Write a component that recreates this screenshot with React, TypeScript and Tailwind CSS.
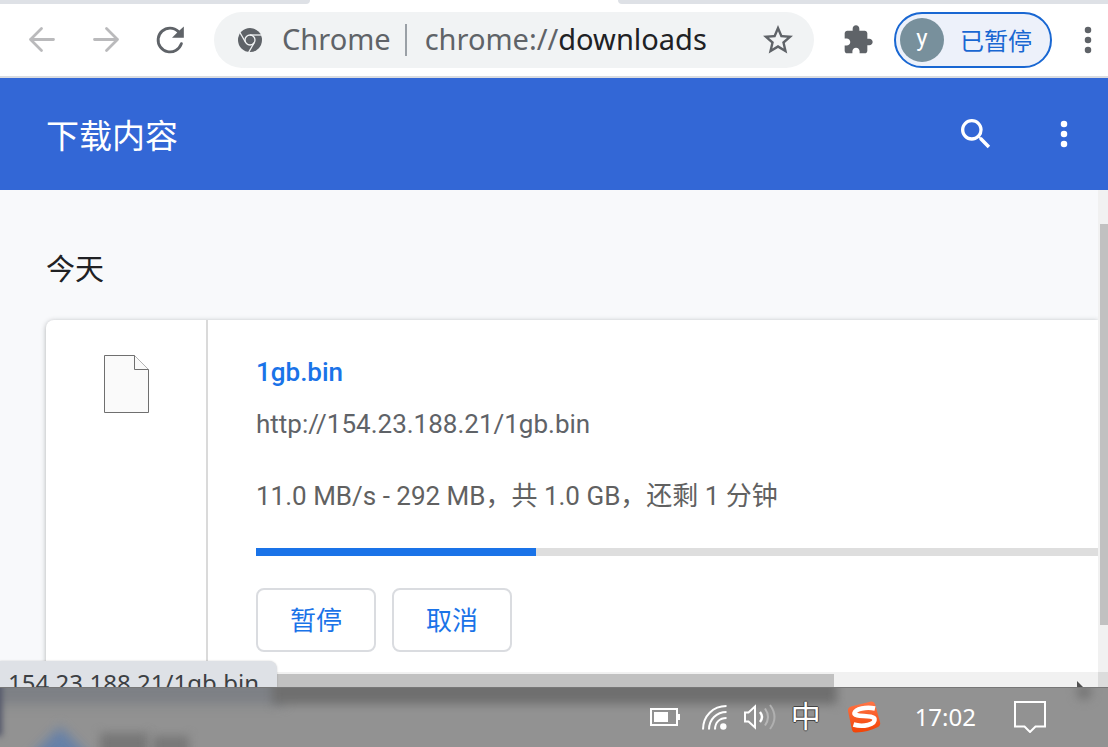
import type { ReactNode } from "react";

const DOWNLOAD = {
  name: "1gb.bin",
  url: "http://154.23.188.21/1gb.bin",
  status: "11.0 MB/s - 292 MB，共 1.0 GB，还剩 1 分钟",
  shown: 33.2,
};

function IconButton({ label, className, children }: { label: string; className: string; children: ReactNode }) {
  return (
    <button type="button" aria-label={label} className={`flex shrink-0 items-center justify-center ${className}`}>
      {children}
    </button>
  );
}

function MoreIcon() {
  return (
    <svg viewBox="0 0 24 24" className="size-10" fill="currentColor" aria-hidden="true">
      <circle cx="12" cy="6" r="1.95" />
      <circle cx="12" cy="12" r="1.95" />
      <circle cx="12" cy="18" r="1.95" />
    </svg>
  );
}

function ArrowIcon({ flip = false }: { flip?: boolean }) {
  return (
    <svg viewBox="0 0 40 40" className={flip ? "size-10 -scale-x-100" : "size-10"} fill="none" stroke="#bababc" strokeWidth="2.8" strokeLinecap="round" strokeLinejoin="round" aria-hidden="true">
      <path d="M31.500 19.500H8.500M19.500 8.500L8.500 19.500L19.500 30.500" />
    </svg>
  );
}

function ChromeIcon() {
  return (
    <svg viewBox="-12 -12 24 24" className="size-6 shrink-0" aria-hidden="true">
      <circle r="12" fill="#5f6368" />
      <g fill="none" stroke="#f1f3f4" strokeWidth="1.3">
        <circle r="5" />
        <path d="M0 -5H11.5" />
        <path d="M0 -5H11.5" transform="rotate(120)" />
        <path d="M0 -5H11.5" transform="rotate(240)" />
      </g>
    </svg>
  );
}

function Toolbar() {
  return (
    <header className="shrink-0 border-b-2 border-[#dadce0] bg-white">
      <div className="flex h-1 justify-between" aria-hidden="true">
        <div className="w-[310px] rounded-br-xl bg-[#dee1e6]" />
        <div className="ml-[308px] flex-1 rounded-bl-xl bg-[#dee1e6]" />
      </div>
      <div className="flex h-18 items-center pl-[22px] text-[#5f6368]">
        <IconButton label="后退" className="size-10"><ArrowIcon /></IconButton>
        <IconButton label="前进" className="ml-6 size-10"><ArrowIcon flip /></IconButton>
        <IconButton label="重新加载" className="ml-6 size-10">
          <svg viewBox="0 0 24 24" className="size-10" fill="currentColor" aria-hidden="true">
            <path d="M17.65 6.35A7.958 7.958 0 0 0 12 4a8 8 0 1 0 7.650 10.400c.2-.7-.25-1.050-.75-1.050-.45 0-.75.25-.95.8A6.300 6.300 0 1 1 12 5.700c1.750 0 3.200.65 4.350 1.850L13.200 10.700H20.300V3.900L17.650 6.350z" />
          </svg>
        </IconButton>
        <div className="ml-6 flex h-14 min-w-0 flex-1 items-center rounded-full bg-[#f1f3f4] pr-[18px] pl-6 font-['Noto_Sans','Noto_Sans_CJK_SC',sans-serif] text-[29px] leading-10">
          <ChromeIcon />
          <span className="ml-5 pb-0.5">Chrome</span>
          <span className="mr-[18px] ml-3.5 h-8 w-0.5 bg-[#9aa0a6]" />
          <a href="chrome://downloads" className="truncate pb-0.5">chrome://<span className="text-[#202124]">downloads</span></a>
          <IconButton label="为此标签页添加书签" className="ml-auto size-9">
            <svg viewBox="0 0 24 24" className="size-9" fill="currentColor" aria-hidden="true">
              <path d="M22 9.24l-7.19-.62L12 2 9.19 8.63 2 9.24l5.46 4.73L5.82 21 12 17.27 18.18 21l-1.63-7.03L22 9.24zM12 15.4l-3.76 2.27 1-4.28-3.32-2.88 4.38-.38L12 6.1l1.71 4.04 4.38.38-3.32 2.88 1 4.28L12 15.4z" />
            </svg>
          </IconButton>
        </div>
        <IconButton label="扩展程序" className="ml-7 size-8">
          <svg viewBox="0 0 24 24" className="size-8" fill="currentColor" aria-hidden="true">
            <path d="M20.5 11H19V7c0-1.1-.9-2-2-2h-4V3.5C13 2.12 11.88 1 10.5 1S8 2.12 8 3.5V5H4c-1.1 0-1.99.9-1.99 2v3.8H3.5c1.49 0 2.7 1.21 2.7 2.7s-1.21 2.7-2.7 2.7H2V20c0 1.1.9 2 2 2h3.8v-1.5c0-1.49 1.21-2.7 2.7-2.7 1.49 0 2.7 1.21 2.7 2.7V22H17c1.1 0 2-.9 2-2v-4h1.5c1.38 0 2.5-1.12 2.5-2.5S21.88 11 20.5 11z" />
          </svg>
        </IconButton>
        <button type="button" className="ml-5 flex h-14 w-[158px] shrink-0 items-center rounded-full border-2 border-[#1967d2] bg-[#edf1fa] pl-1 text-[24px] text-[#1967d2]">
          <span className="flex size-11 items-center justify-center rounded-full bg-[#78909c] pb-1 font-[Roboto,sans-serif] text-white">y</span>
          <span className="ml-4 pt-1">已暂停</span>
        </button>
        <IconButton label="自定义及控制" className="ml-4 size-10"><MoreIcon /></IconButton>
      </div>
    </header>
  );
}

function FileIcon() {
  return (
    <svg viewBox="0 0 45 58" className="h-[58px] w-[45px]" fill="#fafafa" stroke="#6f6f6f" aria-hidden="true">
      <path d="M.5 .5H30.5L44.5 14.5V57.5H.5Z" />
      <path d="M30.5 .5V14.5H44.5" />
    </svg>
  );
}

function DownloadCard() {
  return (
    <article className="flex rounded-l-lg bg-white shadow-[0_1px_5px_rgba(60,64,67,0.4)]">
      <div className="flex w-[162px] shrink-0 justify-center border-r-2 border-[#dadada] pt-[35px] pl-px">
        <FileIcon />
      </div>
      <div className="min-w-0 flex-1 pt-8 pb-10 pl-12 text-[26px] leading-8 text-[#5f6368]">
        <h3 className="leading-10 font-medium text-[#1a73e8]"><a href={DOWNLOAD.url}>{DOWNLOAD.name}</a></h3>
        <a href={DOWNLOAD.url} className="mt-4 block truncate">{DOWNLOAD.url}</a>
        <p className="mt-10 truncate text-[#616161]">{DOWNLOAD.status}</p>
        <div role="progressbar" aria-label="下载进度" aria-valuenow={DOWNLOAD.shown} className="mt-9 h-2 bg-[#dedede]">
          <div className="h-full bg-[#1a73e8]" style={{ width: `${DOWNLOAD.shown}%` }} />
        </div>
        <div className="mt-8 flex gap-4 text-[#1a73e8]">
          <button type="button" className="h-16 w-[120px] rounded-lg border-2 border-[#dadce0] pt-0.5">暂停</button>
          <button type="button" className="h-16 w-[120px] rounded-lg border-2 border-[#dadce0] pt-0.5">取消</button>
        </div>
      </div>
    </article>
  );
}

function Taskbar() {
  return (
    <footer className="relative flex h-15 shrink-0 items-center overflow-hidden border-t border-[#777] bg-[#929292] pr-[62px] pb-0.5 text-white">
      <div className="absolute inset-0" aria-hidden="true">
        <div className="absolute -top-4 -left-4 h-8 w-[300px] bg-[#7d8085] blur-[6px]" />
        <div className="absolute -top-4 left-[272px] h-8 w-[51%] bg-[#6f6f6f] blur-[5px]" />
        <div className="absolute -top-2 -left-2 h-14 w-2.5 bg-[#505468] blur-[3px]" />
        <div className="absolute top-12 left-[38px] size-11 rotate-45 bg-[#6580a8] blur-[6px]" />
        <div className="absolute top-[45px] left-[100px] h-6 w-12 bg-[#777] blur-[5px]" />
        <div className="absolute top-[48px] left-[153px] h-5 w-9 bg-[#787878] blur-[5px]" />
        <div className="absolute -top-1 left-[1076px] size-4 rounded-full bg-[#777] blur-[5px]" />
      </div>
      <div className="relative ml-auto flex items-center">
        <svg viewBox="0 0 30 18" className="h-[18px] w-[30px]" fill="none" aria-hidden="true">
          <path d="M1 1H27V17H1Z" stroke="#fff" strokeWidth="2" />
          <path d="M4 4H18V14H4ZM28 6H30V12H28Z" fill="#fff" />
        </svg>
        <svg viewBox="0 0 26 26" className="ml-[21px] size-[26px]" fill="none" stroke="#fff" strokeWidth="2" aria-hidden="true">
          <path d="M2 25.5C2 12 12 2 25.5 2M8 25.5C8 15.500 15.5 8 25.500 8M14 25.500C14 18.500 18.500 14 25.500 14" />
          <circle cx="22.300" cy="22.500" r="3.200" fill="#fff" stroke="none" />
        </svg>
        <svg viewBox="0 0 34 26" className="ml-4 h-[26px] w-[34px]" fill="none" stroke="#fff" strokeWidth="2" aria-hidden="true">
          <path d="M2 8.500H5.500L12 2.500V23.500L5.500 17.500H2Z" />
          <path d="M17 8Q21 13 17 18" strokeWidth="2.400" />
          <path d="M22 4.500Q28 13 22 21.500" stroke="#b6b6b6" />
          <path d="M27 1Q36 13 27 25" stroke="#b0b0b0" />
        </svg>
        <button type="button" aria-label="中文输入法" className="ml-3.5 text-[30px] leading-10 [text-shadow:1px_0_0_#444,-1px_0_0_#444,0_1px_0_#444,0_-1px_0_#444]">中</button>
        <svg viewBox="0 0 34 32" className="ml-[26px] h-8 w-[34px]" aria-hidden="true">
          <defs>
            <linearGradient id="sogou" x1="0" y1="0" x2="0" y2="1"><stop stopColor="#ff7547" /><stop offset="1" stopColor="#f24306" /></linearGradient>
          </defs>
          <path d="M4 5.500L24 .5Q27 0 28 3L33 21Q34 24 31 26Q21 31 9 31.500Q6 32 5 29L1 10Q.5 6.500 4 5.500Z" fill="url(#sogou)" />
          <path d="M28 7.500C19 5.500 8.500 8 7.500 12C6.500 16.500 26.500 13.500 27.500 18C28.500 23.500 16 26.500 6.500 23.500" fill="none" stroke="#fff" strokeWidth="4.600" />
        </svg>
        <time className="ml-[34px] font-['Noto_Sans',sans-serif] text-[24px] leading-8">17:02</time>
        <svg viewBox="0 0 32 32" className="ml-[38px] size-8" fill="none" stroke="#fff" strokeWidth="2" aria-hidden="true">
          <path d="M1 1H31V25.500H21.500L16 31L10.500 25.500H1Z" />
        </svg>
      </div>
    </footer>
  );
}

export default function App() {
  return (
    <div className="flex h-screen flex-col overflow-hidden bg-[#f8f9fb] font-[Roboto,'Noto_Sans_CJK_SC',sans-serif]">
      <Toolbar />
      <div className="flex h-28 shrink-0 items-center bg-[#3367d6] pr-6 pl-[46px] text-white">
        <h1 className="pt-1.5 text-[33px] leading-10">下载内容</h1>
        <IconButton label="搜索下载内容" className="ml-auto size-10">
          <svg viewBox="0 0 24 24" className="size-10" fill="currentColor" aria-hidden="true">
            <path d="M15.500 14h-.79l-.28-.27A6.471 6.471 0 0 0 16 9.500 6.500 6.500 0 1 0 9.500 16c1.610 0 3.090-.59 4.230-1.570l.27.28v.79l5 4.990L20.490 19l-4.990-5zm-6 0C7.010 14 5 11.990 5 9.500S7.010 5 9.500 5 14 7.010 14 9.500 11.990 14 9.500 14z" />
          </svg>
        </IconButton>
        <IconButton label="更多操作" className="ml-12 size-10"><MoreIcon /></IconButton>
      </div>
      <div className="relative flex min-h-0 flex-1 flex-col overflow-hidden">
        <div className="flex min-h-0 flex-1">
          <main className="min-w-0 flex-1 overflow-hidden pt-15 pl-[46px]">
            <h2 className="mb-[30px] text-[29px] leading-10 text-[#202124]">今天</h2>
            <DownloadCard />
          </main>
          <div className="flex w-2.5 shrink-0 bg-[#f1f1f1] pt-[34px] pb-[47px] pl-0.5" aria-hidden="true">
            <div className="flex-1 bg-[#c1c1c1]" />
          </div>
        </div>
        <div className="flex h-[15px] shrink-0 bg-[#f1f1f1]" aria-hidden="true">
          <div className="flex flex-1 justify-between pt-0.5">
            <div className="w-[76%] bg-[#c1c1c1]" />
            <svg viewBox="0 0 22 13" className="h-[13px] w-[22px]"><path d="M1 7L7 13H1Z" fill="#505050" /></svg>
          </div>
          <div className="w-2.5 bg-[#dcdcdc]" />
        </div>
        <div className="absolute bottom-0 left-0 h-[26px] overflow-hidden rounded-tr-lg bg-[#dee1e6] pt-0.5 pr-[18px] pl-2 font-['Noto_Sans',sans-serif] text-[24px] leading-10 text-[#3c4043] shadow-[0_0_2px_rgba(0,0,0,0.2)]">
          154.23.188.21/1gb.bin
        </div>
      </div>
      <Taskbar />
    </div>
  );
}
